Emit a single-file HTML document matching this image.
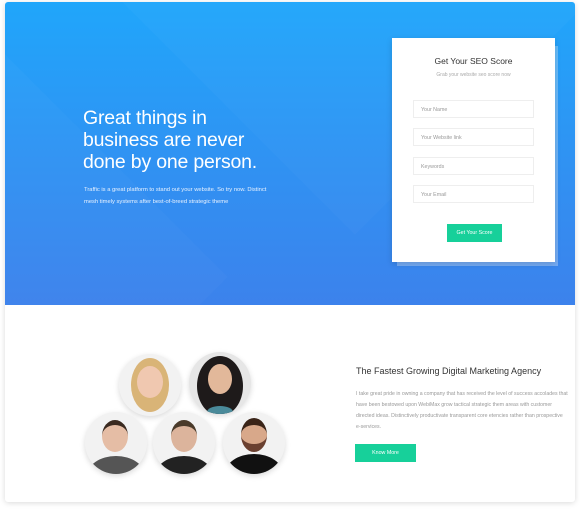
<!DOCTYPE html>
<html><head><style>
*{margin:0;padding:0;box-sizing:border-box}
body{width:580px;height:510px;background:#fff;position:relative;overflow:hidden;font-family:"Liberation Sans",sans-serif}
.wrap{position:absolute;left:5px;top:2px;width:570px;height:500px;background:#fff;box-shadow:0 1px 6px rgba(0,0,0,.15);border-radius:3px;overflow:hidden}
.hero{position:absolute;left:0;top:0;width:570px;height:303px;background:linear-gradient(180deg,#20a6fb 0%,#2f93f3 50%,#3c82ec 100%);overflow:hidden}
.sh{position:absolute;background:rgba(255,255,255,.025);transform:rotate(45deg)}
h1{position:absolute;left:78px;top:105px;color:#fff;font-weight:normal;font-size:19.5px;line-height:22px;width:200px;letter-spacing:-.2px}
.p{position:absolute;left:79px;top:182px;color:#e8f2ff;font-size:5.8px;line-height:12px;width:190px}
.card2{position:absolute;left:392px;top:44px;width:161px;height:220px;background:rgba(255,255,255,.3)}
.card{position:absolute;left:387px;top:36px;width:163px;height:224px;background:#fff;box-shadow:0 2px 6px rgba(0,0,0,.15)}
.card h3{font-weight:normal;font-size:8.5px;color:#333;text-align:center;margin-top:18px}
.card .s{font-size:5px;color:#aaa;text-align:center;margin-top:6px}
.in{position:absolute;left:21px;width:121px;height:18px;border:1px solid #eee;font-size:5.3px;color:#999;padding:6px 7px}
.btn{position:absolute;background:#17d09a;color:#fff;font-size:5.3px;text-align:center}
.av{position:absolute;width:62px;height:62px;border-radius:50%;background:#f2f2f2;box-shadow:0 2px 6px rgba(0,0,0,.15);overflow:hidden}
.av i{position:absolute;border-radius:50%}
h2{position:absolute;left:351px;top:364px;font-weight:normal;font-size:9px;color:#333}
.t{position:absolute;left:351px;top:387px;width:212px;font-size:5.2px;line-height:11px;color:#999}
</style></head><body>
<div class="wrap">
<div class="hero">
<div class="sh" style="left:150px;top:-250px;width:400px;height:400px"></div>
<div class="sh" style="left:-200px;top:100px;width:350px;height:350px"></div>
<h1>Great things in business are never done by one person.</h1>
<div class="p">Traffic is a great platform to stand out your website. So try now. Distinct mesh timely systems after best-of-breed strategic theme</div>
<div class="card2"></div>
<div class="card">
<h3>Get Your SEO Score</h3>
<div class="s">Grab your website seo score now</div>
<div class="in" style="top:62px">Your Name</div>
<div class="in" style="top:90px">Your Website link</div>
<div class="in" style="top:119px">Keywords</div>
<div class="in" style="top:147px">Your Email</div>
<div class="btn" style="left:55px;top:186px;width:55px;height:18px;line-height:18px">Get Your Score</div>
</div>
</div>
<div class="av" style="left:114px;top:352px"><i style="left:12px;top:4px;width:38px;height:54px;background:#d9b477"></i><i style="left:18px;top:12px;width:26px;height:32px;background:#f0c8b0"></i></div>
<div class="av" style="left:184px;top:350px;background:#e6e6e6"><i style="left:8px;top:4px;width:46px;height:60px;background:#1e1a1a"></i><i style="left:19px;top:12px;width:24px;height:30px;background:#e2b89a"></i><i style="left:18px;top:54px;width:26px;height:12px;background:#4a8a9a"></i></div>
<div class="av" style="left:80px;top:410px"><i style="left:2px;top:44px;width:58px;height:40px;background:#555"></i><i style="left:17px;top:8px;width:26px;height:32px;background:#e5bda5;border-top:5px solid #3a2a20"></i></div>
<div class="av" style="left:148px;top:410px"><i style="left:2px;top:44px;width:58px;height:40px;background:#222"></i><i style="left:18px;top:8px;width:26px;height:32px;background:#dcb49c;border-top:6px solid #4a3a2a"></i></div>
<div class="av" style="left:218px;top:410px"><i style="left:2px;top:42px;width:58px;height:40px;background:#111"></i><i style="left:18px;top:6px;width:26px;height:34px;background:#d8a88a;border-top:7px solid #3a2418;border-bottom:8px solid #6a4030"></i></div>
<h2>The Fastest Growing Digital Marketing Agency</h2>
<div class="t">I take great pride in owning a company that has received the level of success accolades that have been bestowed upon WebiMax grow tactical strategic them areas with customer directed ideas. Distinctively productivate transparent core etencies rather than prospective e-services.</div>
<div class="btn" style="left:350px;top:442px;width:61px;height:18px;line-height:18px">Know More</div>
</div>
</body></html>
